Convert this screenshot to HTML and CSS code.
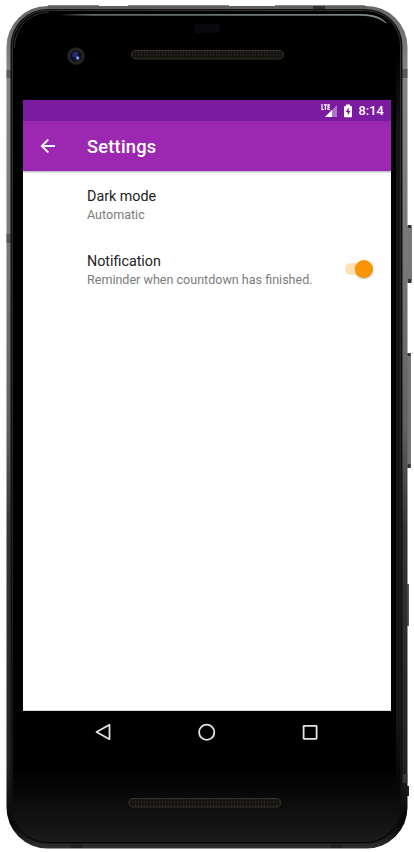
FILE: index.html
```html
<!DOCTYPE html>
<html lang="en">
<head>
<meta charset="utf-8">
<title>Settings</title>
<link rel="stylesheet" href="styles.css">
</head>
<body>
<main class="device">
  <svg class="shell" viewBox="0 0 414 852" aria-hidden="true">
    <defs>
      <linearGradient id="metal" x1="0" y1="0" x2="0" y2="1">
        <stop offset="0" stop-color="#666"/><stop offset=".08" stop-color="#858585"/><stop offset=".3" stop-color="#777"/><stop offset=".5" stop-color="#606060"/><stop offset=".62" stop-color="#353535"/><stop offset=".9" stop-color="#242424"/><stop offset=".97" stop-color="#050505"/><stop offset="1" stop-color="#303030"/>
      </linearGradient>
      <linearGradient id="glass" x1="0" y1="0" x2="0" y2="1">
        <stop offset="0" stop-color="#000"/><stop offset=".91" stop-color="#000"/><stop offset=".96" stop-color="#0e0e0e"/><stop offset="1" stop-color="#1b1b1b"/>
      </linearGradient>
      <linearGradient id="shine" x1="0" y1="0" x2="1" y2="0">
        <stop offset="0" stop-color="#687477" stop-opacity="0"/><stop offset=".1" stop-color="#687477"/><stop offset=".94" stop-color="#849194"/><stop offset="1" stop-color="#8b9699"/>
      </linearGradient>
      <linearGradient id="bottom" x1="0" y1="0" x2="1" y2="0">
        <stop offset="0" stop-color="#222"/><stop offset=".2" stop-color="#555"/><stop offset=".8" stop-color="#555"/><stop offset="1" stop-color="#222"/>
      </linearGradient>
      <linearGradient id="rim" x1="0" y1="0" x2="0" y2="1">
        <stop offset="0" stop-color="#333"/><stop offset=".9" stop-color="#161616"/><stop offset="1" stop-color="#050505"/>
      </linearGradient>
      <linearGradient id="side" x1="0" y1="0" x2="0" y2="1">
        <stop offset="0" stop-color="#161616" stop-opacity="0"/><stop offset=".1" stop-color="#161616"/><stop offset=".9" stop-color="#161616"/><stop offset="1" stop-color="#161616" stop-opacity="0"/>
      </linearGradient>
      <pattern id="mesh" width="3" height="3" patternUnits="userSpaceOnUse"><rect width="3" height="3" fill="#15130f"/><rect width="1" height="2" fill="#29251f"/></pattern>
    </defs>
    <path d="M48 5H99V7H48zM128 5H229V7H128zM275 5H365V7H275z" fill="#888"/>
    <rect x="407" y="225" width="5" height="58" rx="1" fill="#777"/>
    <path d="M409.500 225v3M409.500 279v4" stroke="#333" stroke-width="3"/>
    <rect x="407" y="353" width="4" height="115" rx="1" fill="#747474"/>
    <path d="M409 353v3M409 464v4" stroke="#333" stroke-width="3"/>
    <rect x="407" y="584" width="2" height="42" fill="#555"/>
    <rect x="407" y="786" width="2" height="10" fill="#222"/>
    <rect x="6.500" y="6" width="401" height="842.500" rx="41" fill="url(#metal)"/>
    <path d="M48 7.500H366" stroke="#5c5c5c" stroke-width="2"/>
    <path d="M6.500 70h5v8h-5zM402 69h5.500v9H402zM6.500 234h5v9h-5zM402 774h5.500v9H402z" fill="#444" opacity=".65"/>
    <path d="M313 6h12v5h-12z" fill="#333"/>
    <rect x="10.500" y="9" width="392" height="834.500" rx="37" fill="#111"/>
    <rect x="12.500" y="10.500" width="388" height="832" rx="35" fill="url(#glass)" stroke="url(#rim)"/>
    <path d="M396 54h4v740h-4z" fill="url(#side)"/>
    <path d="M14.500 48C15 26 29 13.500 49 12" fill="none" stroke="#333" stroke-width="1"/>
    <path d="M60 14.500H360C373 14.500 381 17 386 23C379 17 370 15.500 360 15.200H60z" fill="url(#shine)" stroke="url(#shine)" stroke-width=".8"/>
    <path d="M46 846.500H370" stroke="url(#bottom)" stroke-width="3"/>
    <path d="M71 844h12v4H71zM331 844h12v4h-12z" fill="#222"/>
    <rect x="194" y="24" width="26" height="9" rx="4" fill="#090a0e"/>
    <circle cx="76" cy="56" r="8.800" fill="#25221f"/>
    <circle cx="76" cy="56" r="5.500" fill="#0d1027"/>
    <path d="M73 53q3-3 5 0l-1 4q-3 2-5-1z" fill="#222d70"/>
    <circle cx="77.700" cy="58" r="1.700" fill="#829bdd"/>
    <rect x="131.500" y="50.500" width="152" height="8.500" rx="4.200" fill="url(#mesh)" stroke="#37322b"/>
    <rect x="128.800" y="798.500" width="152" height="8.500" rx="4.200" fill="url(#mesh)" stroke="#37342e"/>
  </svg>

  <section class="screen">
    <header class="status">
      <svg class="signal" viewBox="0 0 17 14" aria-hidden="true">
        <path d="M16 1v12H4z" fill="#fff" opacity=".4"/><path d="M11 6v7H4z" fill="#fff"/>
        <path d="M1 0v5.500h2M2.800 .8h3.200M4.400 .8v5.200M9 .8H7v4.700h2.200M7 3.100h2" fill="none" stroke="#fff" stroke-width="1.200"/>
      </svg>
      <svg class="battery" viewBox="0 0 8 14" aria-hidden="true"><path d="M2 .5h4V2h1q1 0 1 1v9.500q0 .8-1 .8H1q-1 0-1-.8V3q0-1 1-1h1z" fill="#fff"/><path d="M4.700 3.500 1.700 8h2v3.500L6.500 7H4.700z" fill="#7b1b9f"/></svg>
      <span class="clock">8:14</span>
    </header>
    <div class="toolbar">
      <svg class="back" viewBox="0 0 16 16" aria-hidden="true"><path d="M15 8H2M8.300 1.500 1.800 8l6.500 6.500" fill="none" stroke="#fff" stroke-width="1.800"/></svg>
      <h1>Settings</h1>
    </div>
    <div class="settings">
      <div class="row">
        <div><h2>Dark mode</h2><p>Automatic</p></div>
      </div>
      <div class="row">
        <div><h2>Notification</h2><p>Reminder when countdown has finished.</p></div>
        <div class="switch"><span class="thumb"></span></div>
      </div>
    </div>
  </section>

  <nav class="nav">
    <svg viewBox="0 0 18 18" aria-hidden="true"><path d="M15.500 1.800v14.400L2.500 9z"/></svg>
    <svg viewBox="0 0 18 18" aria-hidden="true"><circle cx="8.700" cy="9.200" r="7.600"/></svg>
    <svg viewBox="0 0 18 18" aria-hidden="true"><rect x="2.600" y="2.800" width="13" height="13" rx=".5"/></svg>
  </nav>
</main>
</body>
</html>
```
FILE: styles.css
```css
* { box-sizing: border-box; }
body { margin: 0; background: #fff; font-family: Roboto, "Liberation Sans", sans-serif; }
h1, h2, p { margin: 0; white-space: nowrap; }
svg { display: block; flex: none; }
.device { position: relative; width: 414px; height: 852px; padding: 100px 23px 0; overflow: hidden; }
.shell { position: absolute; inset: 0; width: 414px; height: 852px; }
.screen { position: relative; width: 368px; height: 611px; background: #fff; border-bottom: 1px solid #d5dada; }
.status { display: flex; align-items: center; justify-content: flex-end; height: 21px; padding-right: 7px; background: #7b1b9f; color: #fff; }
.signal { width: 17px; height: 14px; margin-right: 6px; }
.battery { width: 8px; height: 14px; margin-right: 6.500px; }
.clock { width: 25.500px; padding-top: 1px; font-size: 12.800px; line-height: 20px; font-weight: 500; white-space: nowrap; }
.toolbar { display: flex; align-items: center; height: 50px; padding-left: 17px; background: #9c27b0; color: #fff; box-shadow: 0 1px 2px rgba(0, 0, 0, .35); }
.back { width: 16px; height: 16px; margin-right: 31px; }
h1 { padding-top: 1px; font-size: 18.300px; line-height: 24px; font-weight: 500; letter-spacing: .22px; }
.settings { padding-top: 16px; }
.row { display: flex; align-items: center; justify-content: space-between; height: 36px; margin-bottom: 29px; padding: 0 18px 0 64px; }
h2 { padding-bottom: 2px; font-size: 14.300px; line-height: 18px; font-weight: 400; color: #222; }
p { font-size: 12.550px; line-height: 16px; color: #7c7c7c; }
.switch { display: flex; justify-content: flex-end; align-items: center; width: 28px; height: 12px; margin-top: -3px; border-radius: 6px; background: #ffe0b2; }
.thumb { flex: none; width: 18px; height: 18px; border-radius: 50%; background: #fb9404; box-shadow: 0 1px 2px rgba(0, 0, 0, .3); }
.nav { position: relative; display: flex; justify-content: space-between; padding: 12px 72px 0 71px; }
.nav svg { width: 18px; height: 18px; fill: none; stroke: #e4e4e4; stroke-width: 1.800; stroke-linejoin: round; }
```
